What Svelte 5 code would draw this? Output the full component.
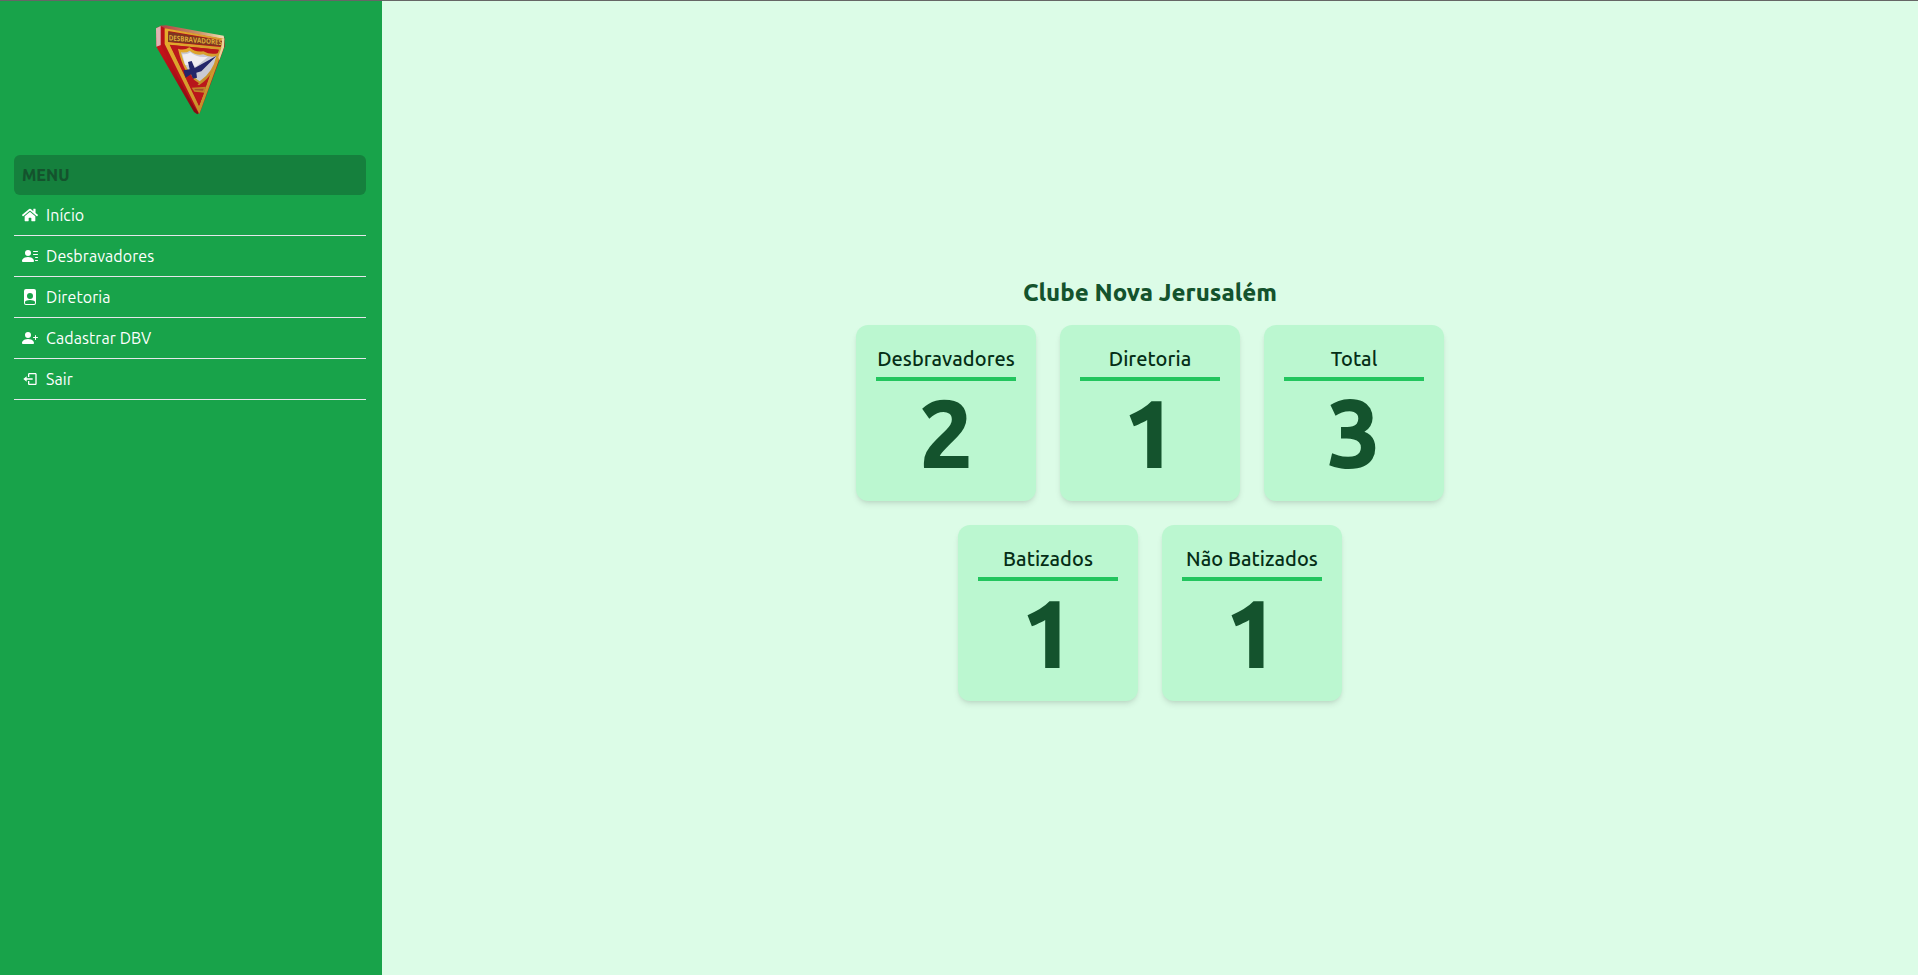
<script>
  const items = [
    { label: 'Início', icon: 'home' },
    { label: 'Desbravadores', icon: 'people' },
    { label: 'Diretoria', icon: 'file' },
    { label: 'Cadastrar DBV', icon: 'add' },
    { label: 'Sair', icon: 'exit' }
  ];
  const icons = {
    home: { box: '0 0 576 512', d: 'M280.37 148.26L96 300.11V464a16 16 0 0 0 16 16l112.06-.29a16 16 0 0 0 15.92-16V368a16 16 0 0 1 16-16h64a16 16 0 0 1 16 16v95.64a16 16 0 0 0 16 16.05L464 480a16 16 0 0 0 16-16V300L295.67 148.26a12.19 12.19 0 0 0-15.3 0zM571.6 251.47L488 182.56V44.05a12 12 0 0 0-12-12h-56a12 12 0 0 0-12 12v72.61L318.47 43a48 48 0 0 0-61 0L4.34 251.47a12 12 0 0 0-1.6 16.9l25.5 31A12 12 0 0 0 45.15 301l235.22-193.74a12.19 12.19 0 0 1 15.3 0L530.9 301a12 12 0 0 0 16.9-1.6l25.5-31a12 12 0 0 0-1.7-16.93z' },
    people: { box: '0 0 16 16', d: 'M6 8a3 3 0 1 0 0-6 3 3 0 0 0 0 6zm-5 6s-1 0-1-1 1-4 6-4 6 3 6 4-1 1-1 1H1zM11 3.5a.5.5 0 0 1 .5-.5h4a.5.5 0 0 1 0 1h-4a.5.5 0 0 1-.5-.5zm.5 2.5a.5.5 0 0 0 0 1h4a.5.5 0 0 0 0-1h-4zm2 3a.5.5 0 0 0 0 1h2a.5.5 0 0 0 0-1h-2zm0 3a.5.5 0 0 0 0 1h2a.5.5 0 0 0 0-1h-2z' },
    file: { box: '0 0 16 16', d: 'M12 0H4a2 2 0 0 0-2 2v12a2 2 0 0 0 2 2h8a2 2 0 0 0 2-2V2a2 2 0 0 0-2-2zm-1 7a3 3 0 1 1-6 0 3 3 0 0 1 6 0zm-3 4c2.623 0 4.146.826 5 1.755V14a1 1 0 0 1-1 1H4a1 1 0 0 1-1-1v-1.245C3.854 11.825 5.377 11 8 11z' },
    add: { box: '0 0 16 16', d: 'M1 14s-1 0-1-1 1-4 6-4 6 3 6 4-1 1-1 1H1zm5-6a3 3 0 1 0 0-6 3 3 0 0 0 0 6zM13.5 5a.5.5 0 0 1 .5.5V7h1.5a.5.5 0 0 1 0 1H14v1.5a.5.5 0 0 1-1 0V8h-1.5a.5.5 0 0 1 0-1H13V5.5a.5.5 0 0 1 .5-.5z' },
    exit: { box: '0 0 24 24', d: 'M16 13v-2H7V8l-5 4 5 4v-3zM20 3h-9c-1.103 0-2 .897-2 2v4h2V5h9v14h-9v-4H9v4c0 1.103.897 2 2 2h9c1.103 0 2-.897 2-2V5c0-1.103-.897-2-2-2z' }
  };
  const stats = [
    { label: 'Desbravadores', value: 2 },
    { label: 'Diretoria', value: 1 },
    { label: 'Total', value: 3 },
    { label: 'Batizados', value: 1 },
    { label: 'Não Batizados', value: 1 }
  ];
</script>

<div class="page">
  <aside>
    <svg class="logo" viewBox="0 0 300 345" aria-label="Desbravadores">
      <defs>
        <linearGradient id="gold" x1="0" y1="0" x2="1" y2="1">
          <stop offset="0" stop-color="#e6ad2c" />
          <stop offset=".65" stop-color="#d19a2e" />
          <stop offset="1" stop-color="#a97520" />
        </linearGradient>
        <linearGradient id="side" x1="0" y1="0" x2="0" y2="1">
          <stop offset="0" stop-color="#dc171c" />
          <stop offset="1" stop-color="#850a12" />
        </linearGradient>
        <linearGradient id="shine" x1="0" y1="0" x2="1" y2="0">
          <stop offset="0" stop-color="#b33f42" />
          <stop offset=".6" stop-color="#c99068" />
          <stop offset="1" stop-color="#f4dfb5" />
        </linearGradient>
      </defs>
      <path fill="url(#side)" d="M48 55 64 47 180 306 172 313 162 306 49 110Z" />
      <path fill="#ddb5b2" d="M48 55 64 47 65 104 49 110Z" />
      <path fill="#ba1218" d="M62 47 253 82 254 109 178 312 160 286 62 105Z" />
      <path fill="url(#shine)" d="M60 47 78 46 251 77 253 88 80 57Z" />
      <path fill="url(#gold)" fill-rule="evenodd" d="M74 55 252 86 251 111 178 312 74 102ZM85 63 84 96 242 111 246 91ZM89 104 177 288 235 119Z" />
      <path fill="#ecd09a" d="M245 86 253 86 252 112 238 151 235 141 244 113Z" />
      <path fill="#7d3520" d="M85 65 246 92 243 109 84 95Z" />
      <text class="badge" transform="translate(86 91) skewY(5)" textLength="160" lengthAdjust="spacingAndGlyphs">DESBRAVADORES</text>
      <path fill="#bb171c" d="M91 105 237 119 178 286Z" />
      <path fill="url(#gold)" d="M114 116Q132 123 148 112 165 128 190 124 212 136 236 129 230 190 177 226 132 197 114 116Z" />
      <path fill="#c9c9d3" d="M123 127Q139 130 149 122 168 138 190 133 210 144 229 138 219 187 179 214 136 187 123 127Z" />
      <path fill="#f0edf0" d="M127 132Q141 135 151 127 172 145 204 140L168 170 135 164Z" />
      <path fill="#b8151b" d="M134 189 148 187 162 209 177 220 162 232 146 220Z" />
      <path fill="#242569" d="M230 137 184 184 169 188 171 203 159 206 153 193 137 203 130 181 149 178 144 156 155 153 164 174Z" />
      <path fill="#c28428" d="M155 233 198 230 193 248 163 245Z" />
      <path fill="#a5502a" d="M163 237 191 236 189 242 165 241Z" />
      <path fill="#bb171c" d="M162 247 192 250 177 286Z" />
    </svg>
    <nav>
      <h2>MENU</h2>
      {#each items as item}
        <div class="item">
          <svg viewBox={icons[item.icon].box}><path d={icons[item.icon].d} /></svg>
          <span>{item.label}</span>
        </div>
      {/each}
    </nav>
  </aside>
  <main>
    <h1>Clube Nova Jerusalém</h1>
    <div class="cards">
      {#each stats as stat}
        <section>
          <h3>{stat.label}</h3>
          <strong>{stat.value}</strong>
        </section>
      {/each}
    </div>
  </main>
</div>

<style>
  :global(body) { margin: 0; }
  * { box-sizing: border-box; }
  .page {
    display: flex;
    height: 975px;
    border-top: 1px solid #666;
    background: #dcfce7;
    font-family: Ubuntu, "Noto Sans", sans-serif;
  }
  aside {
    width: 382px;
    padding: 9px 16px 0 14px;
    background: #18a34a;
  }
  .logo {
    display: block;
    width: 100px;
    height: 115px;
    margin: 0 0 30px 126px;
  }
  .badge {
    font: 700 22px "Open Sans", sans-serif;
    fill: #dcae3a;
  }
  h1, h2, h3 { margin: 0; }
  h2 {
    height: 40px;
    padding-left: 8px;
    border-radius: 6px;
    background: #15803d;
    color: #14532d;
    font-size: 16px;
    font-weight: 800;
    line-height: 40px;
  }
  .item {
    display: flex;
    align-items: center;
    gap: 8px;
    height: 41px;
    padding-left: 8px;
    border-bottom: 1px solid #e5e7eb;
    color: #fff;
    font-size: 16px;
    font-weight: 430;
    line-height: 24px;
    letter-spacing: 0.08px;
    white-space: nowrap;
  }
  .item svg {
    width: 16px;
    height: 16px;
    fill: currentColor;
  }
  main {
    flex: 1;
    display: flex;
    flex-direction: column;
    align-items: center;
    justify-content: center;
    gap: 16px;
    padding-top: 2px;
  }
  h1 {
    color: #14532d;
    font-size: 24px;
    font-weight: 800;
    line-height: 32px;
    white-space: nowrap;
  }
  .cards {
    display: flex;
    flex-wrap: wrap;
    justify-content: center;
    gap: 24px;
    width: 640px;
  }
  section {
    width: 180px;
    height: 176px;
    padding: 20px;
    border-radius: 12px;
    background: #bbf7d0;
    box-shadow: 0 4px 6px -1px #0000001a, 0 2px 4px -2px #0000001a;
    text-align: center;
  }
  h3 {
    height: 36px;
    border-bottom: 4px solid #22c55e;
    color: #052e16;
    font-size: 20px;
    font-weight: 525;
    line-height: 28px;
    letter-spacing: 0.06px;
    white-space: nowrap;
  }
  strong {
    display: block;
    margin-top: 4px;
    color: #14532d;
    font-size: 96px;
    font-weight: 800;
    line-height: 96px;
  }
</style>
